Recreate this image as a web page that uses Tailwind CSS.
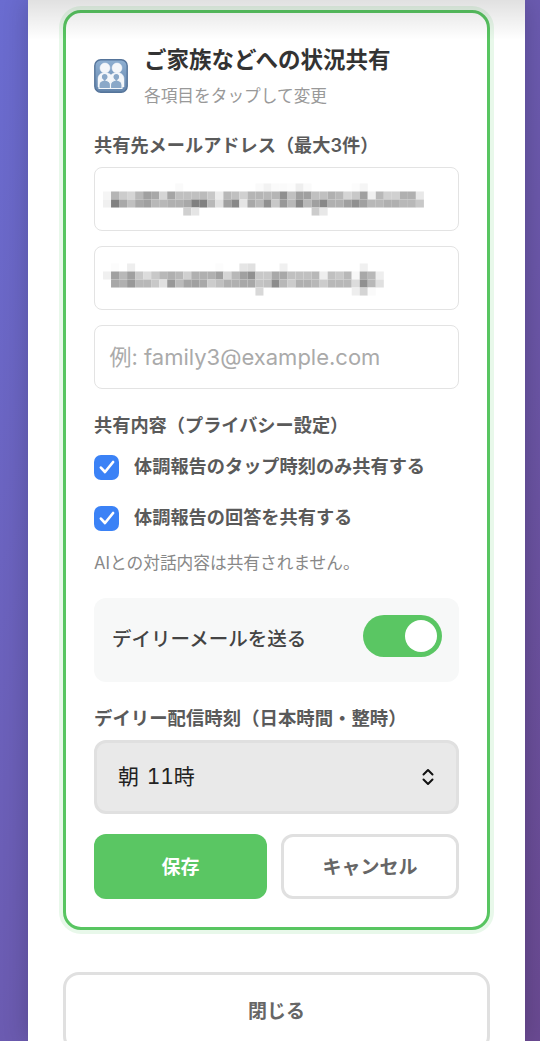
<!DOCTYPE html>
<html lang="ja">

<head>
    <meta charset="UTF-8">
    <meta name="viewport" content="width=device-width, initial-scale=1.0">
    <title>ご家族などへの状況共有</title>
    <script src="https://cdn.jsdelivr.net/npm/@tailwindcss/browser@4"></script>
</head>

<body class="h-screen overflow-hidden bg-gradient-to-br from-[#6a6cd0] to-[#6a4a92] font-['Inter','Noto_Sans_CJK_JP',sans-serif] text-[#555]">
    <div class="relative ml-[28px] h-[1041px] w-[497px] overflow-hidden bg-white px-[35px] pt-[10px] shadow-[0_0_24px_rgba(0,0,0,0.2)]">
        <div class="rounded-[18px] border-[3px] border-[#58c561] bg-white px-[28px] pb-[28px] pt-[30px] shadow-[0_0_0_4px_#e8f8ea]">
            <div class="flex items-center gap-[16px]">
                <svg class="h-[34px] w-[34px] shrink-0" viewBox="0 0 34 34">
                    <defs>
                        <linearGradient id="icon-bg" x1="0" y1="0" x2="0" y2="1">
                            <stop offset="0" stop-color="#8fb0d2" />
                            <stop offset="1" stop-color="#6485ac" />
                        </linearGradient>
                    </defs>
                    <rect x="0.8" y="0.8" width="32.4" height="32.4" rx="6" fill="url(#icon-bg)" stroke="#55749a" stroke-width="1.4" />
                    <g fill="#f4f7fa" stroke="#f4f7fa" stroke-width="0.5">
                        <circle cx="11" cy="9" r="5" />
                        <circle cx="23" cy="9" r="5" />
                        <path d="M4 28v-8c0-4 3-6.5 7-6.5 2.500 0 4.600 1 6 2.600 1.400-1.600 3.500-2.600 6-2.600 4 0 7 2.500 7 6.500v8z" />
                    </g>
                    <g fill="#8aa8c8" stroke="#f4f7fa" stroke-width="1.100">
                        <path d="M5 29.500v-3.500c0-2.700 2-4.200 4.200-4.800-1.200-.8-1.900-2-1.900-3.200 0-2 1.600-3.500 3.400-3.500s3.400 1.500 3.400 3.500c0 1.200-.7 2.400-1.900 3.200 2.200.6 4.300 2.100 4.300 4.800v3.500z" />
                        <path d="M16.500 29.500v-3.500c0-2.700 2.100-4.200 4.300-4.800-1.200-.8-1.900-2-1.900-3.200 0-2 1.600-3.500 3.400-3.500s3.400 1.500 3.400 3.500c0 1.200-.7 2.400-1.900 3.200 2.200.6 4.200 2.100 4.200 4.800v3.500z" />
                    </g>
                </svg>
                <div>
                    <h2 class="pt-[1px] text-[22.500px] font-bold leading-[32px] text-[#333]">ご家族などへの状況共有</h2>
                    <p class="mt-[8px] text-[16.700px] leading-[24px] text-[#999]">各項目をタップして変更</p>
                </div>
            </div>

            <p class="mt-[24px] text-[18.200px] font-semibold leading-[26px] text-[#5a5a5a]">共有先メールアドレス（最大3件）</p>
            <div class="mt-[9px] flex flex-col gap-[15px]">
                <div class="h-[64px] rounded-[8px] border-[1.500px] border-[#e3e3e3] bg-white">
                    <svg id="mosaic-1" class="h-full w-full" viewBox="0 0 362 61"></svg>
                </div>
                <div class="h-[64px] rounded-[8px] border-[1.500px] border-[#e3e3e3] bg-white">
                    <svg id="mosaic-2" class="h-full w-full" viewBox="0 0 362 61"></svg>
                </div>
                <div class="flex h-[64px] items-center rounded-[8px] border-[1.500px] border-[#e3e3e3] bg-white px-[14.500px] text-[22px] text-[#aaa]">例: family3@example.com</div>
            </div>

            <p class="mt-[23px] text-[18.200px] font-semibold leading-[26px] text-[#5a5a5a]">共有内容（プライバシー設定）</p>
            <div class="mt-[16px] flex h-[26px] items-center gap-[15px]">
                <span class="flex h-[25px] w-[25px] items-center justify-center rounded-[7px] bg-[#3b82f6]">
                    <svg class="h-[20px] w-[20px]" viewBox="0 0 18 18" fill="none" stroke="white" stroke-width="2.400" stroke-linecap="round" stroke-linejoin="round"><path d="M3.500 9.500l3.700 4 7.300-9" /></svg>
                </span>
                <span class="text-[18.200px] font-semibold text-[#5a5a5a]">体調報告のタップ時刻のみ共有する</span>
            </div>
            <div class="mt-[25px] flex h-[26px] items-center gap-[15px]">
                <span class="flex h-[25px] w-[25px] items-center justify-center rounded-[7px] bg-[#3b82f6]">
                    <svg class="h-[20px] w-[20px]" viewBox="0 0 18 18" fill="none" stroke="white" stroke-width="2.400" stroke-linecap="round" stroke-linejoin="round"><path d="M3.500 9.500l3.700 4 7.300-9" /></svg>
                </span>
                <span class="text-[18.200px] font-semibold text-[#5a5a5a]">体調報告の回答を共有する</span>
            </div>
            <p class="mt-[20px] text-[16.700px] leading-[24px] text-[#888]">AIとの対話内容は共有されません。</p>

            <div class="mt-[23px] flex h-[84px] items-center justify-between rounded-[12px] bg-[#f7f8f8] pl-[18px] pr-[17px]">
                <span class="text-[19.500px] font-medium text-[#444]">デイリーメールを送る</span>
                <span class="mb-[8px] flex h-[42px] w-[79px] items-center justify-end rounded-full bg-[#5ac663] pr-[5px]">
                    <span class="h-[32px] w-[32px] rounded-full bg-white"></span>
                </span>
            </div>

            <p class="mt-[23px] text-[18.400px] font-semibold leading-[26px] text-[#5a5a5a]">デイリー配信時刻（日本時間・整時）</p>
            <div class="mt-[9px] flex h-[74px] items-center justify-between rounded-[12px] border-[3px] border-[#e0e0e0] bg-[#e9e9e9] pl-[21px] pr-[21px]">
                <span class="text-[21px] tabular-nums text-[#222] [word-spacing:2px]">朝 11時</span>
                <svg class="h-[20px] w-[14px]" viewBox="0 0 14 20" fill="none" stroke="#111" stroke-width="2" stroke-linecap="round" stroke-linejoin="round"><path d="M2.500 7.500L7 3l4.500 4.500M2.500 12.500L7 17l4.500-4.500" /></svg>
            </div>

            <div class="mt-[20px] flex gap-[14px]">
                <button class="h-[65px] w-[173px] rounded-[12px] bg-[#5ac663] pt-[3px] text-[19px] font-bold text-white">保存</button>
                <button class="h-[65px] w-[178px] rounded-[12px] border-[3px] border-[#e0e0e0] bg-white pt-[3px] text-[19px] font-bold text-[#666]">キャンセル</button>
            </div>
        </div>

        <button class="mt-[42px] h-[80px] w-full rounded-[16px] border-[3px] border-[#e0e0e0] bg-white text-[19px] font-bold text-[#666]">閉じる</button>

        <div class="absolute inset-x-0 top-0 h-[40px] bg-gradient-to-b from-black/12 to-transparent"></div>
    </div>

    <script>
        // pixelated mail addresses: [row y, first col, gray values]
        let mosaics = {
            "mosaic-1": [
                [15, 9, "fa"], [15, 19, "fa f2 fa fa fc ee fa"], [15, 31, "fc f5"],
                [23, 0, "f5 b5 cc d5 b8 a0 a8 d5 a5 c0 c0 c0 bb c8 ec b8 c0 d0 b5 b5 b8 b5 8f c0 a0 a0 c0 c0 b0 b8 d5 c8 a0 f0 b8 d0 d0 b0 b0 e8"],
                [31, 0, "f0 80 a8 c0 a8 a0 b8 b8 b0 b0 a8 80 80 b8 e0 a0 88 e5 a8 b8 90 c8 98 b8 88 b8 a0 88 b0 b0 a0 90 a0 b8 b8 b0 b0 b8 b8 c8"],
                [39, 10, "d0 e5"], [39, 26, "cc e8"]
            ],
            "mosaic-2": [
                [16, 1, "fc"], [16, 3, "ee"], [16, 14, "fc"], [16, 17, "e5 e0"], [16, 22, "f0"], [16, 32, "f0"],
                [24, 0, "f0 a0 b8 a0 c8 dc c8 b8 b0 b8 d0 b0 b0 b0 a0 d5 b8 a0 90 c8 c8 a8 a8 c0 c0 c0 b8 ee c0 c8 b8 f8 a8 b8 ee"],
                [32, 1, "a8 b0 98 b8 b8 c8 e0 98 bb a5 a0 a8 cc c0 b0 b0 a8 a8 c4 c0 8c b8 cc b0 b0 b8 cc b8 b8 b8 dc 90 b8 e0"],
                [40, 19, "d8"], [40, 31, "ee d4 fa"]
            ]
        }

        for (let id in mosaics) {
            let svg = document.getElementById(id)
            mosaics[id].forEach(([y, col, grays]) => {
                grays.split(" ").forEach((g, i) => {
                    let rect = document.createElementNS("http://www.w3.org/2000/svg", "rect")
                    rect.setAttribute("x", 8 + (col + i) * 8)
                    rect.setAttribute("y", y)
                    rect.setAttribute("width", 8)
                    rect.setAttribute("height", 8)
                    rect.setAttribute("fill", "#" + g + g + g)
                    svg.appendChild(rect)
                })
            })
        }
    </script>
</body>

</html>
